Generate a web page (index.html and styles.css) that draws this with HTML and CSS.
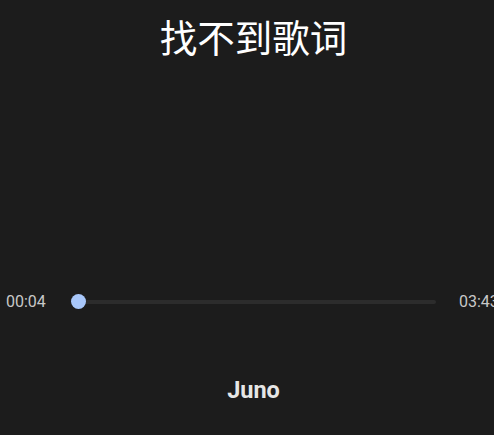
FILE: index.html
```html
<!DOCTYPE html>
<html lang="zh">
<head>
    <meta charset="UTF-8">
    <meta name="viewport" content="width=device-width, initial-scale=1.0">
    <title>播放</title>
    <link rel="stylesheet" href="styles.css">
</head>
<body>
    <div class="player">
        <div class="lyrics">
            <h1 class="no-lyrics">找不到歌词</h1>
        </div>

        <div class="progress">
            <span class="time">00:04</span>
            <div class="track">
                <div class="thumb"></div>
            </div>
            <span class="time">03:43</span>
        </div>

        <div class="song-title">Juno</div>
    </div>
</body>
</html>
```

FILE: styles.css
```css
* {
    margin: 0;
    padding: 0;
    box-sizing: border-box;
}

body {
    font-family: Roboto, 'Noto Sans CJK SC', sans-serif;
    background: #1c1c1c;
    color: #fff;
    height: 435px;
    overflow: hidden;
}

/* 画面より少し広いレイアウト (右の時間が切れる) */
.player {
    display: flex;
    flex-direction: column;
    width: 507px;
}

.lyrics {
    padding-top: 10px;
    height: 62px;
    text-align: center;
}

.no-lyrics {
    font-family: 'Noto Sans CJK SC', sans-serif;
    font-size: 37.5px;
    font-weight: normal;
    line-height: 52px;
    color: #fff;
}

.progress {
    display: flex;
    align-items: center;
    height: 20px;
    padding: 0 8px 0 6px;
    margin-top: 230px;
}

.time {
    font-size: 16px;
    line-height: 20px;
    color: #c8c8c8;
    width: 40px;
}

.track {
    position: relative;
    flex: 1;
    height: 4px;
    margin: 0 23px 0 26px;
    border-radius: 2px;
    background: #2c2c2c;
}

.thumb {
    position: absolute;
    left: -1px;
    top: -6px;
    width: 15px;
    height: 15px;
    border-radius: 50%;
    background: #a8c7fa;
}

.song-title {
    margin-top: 63px;
    text-align: center;
    font-size: 23.5px;
    font-weight: bold;
    line-height: 30px;
    color: #e6e6e6;
}
```
